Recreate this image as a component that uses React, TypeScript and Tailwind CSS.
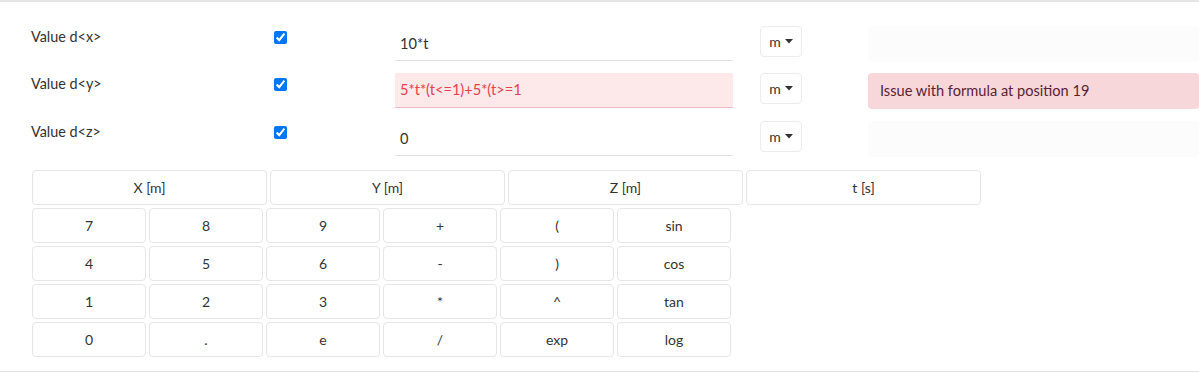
import React from 'react';

type Row = { label: string; value: string; error?: string };

const ROWS: Row[] = [
  { label: 'Value d<x>', value: '10*t' },
  { label: 'Value d<y>', value: '5*t*(t<=1)+5*(t>=1', error: 'Issue with formula at position 19' },
  { label: 'Value d<z>', value: '0' },
];

const HEADERS = ['X [m]', 'Y [m]', 'Z [m]', 't [s]'];

const KEYS = [
  ['7', '8', '9', '+', '(', 'sin'],
  ['4', '5', '6', '-', ')', 'cos'],
  ['1', '2', '3', '*', '^', 'tan'],
  ['0', '.', 'e', '/', 'exp', 'log'],
];

const Caret = () => (
  <svg width="8" height="5" viewBox="0 0 8 5" className="ml-[4px]">
    <path d="M0 0h8L4 4.5z" fill="#333" />
  </svg>
);

export default function App() {
  return (
    <div
      className="w-[1199px] h-[372px] overflow-hidden bg-white text-[#333] text-[14px] border-t-2 border-b border-[#e6e6e6]"
      style={{ fontFamily: 'Lato, "Open Sans", sans-serif' }}
    >
      <div className="flex flex-col gap-[12.5px] pt-[23.5px]">
        {ROWS.map((row) => (
          <div key={row.label} className="flex items-start h-[35px]">
            <div className="w-[243px] pl-[31px] pt-[1px] leading-5 text-[14.4px]">{row.label}</div>
            <div className="w-[152px] pt-[2px] pl-[31px]">
              <input type="checkbox" defaultChecked className="m-0 w-[13px] h-[13px] accent-[#0075ff]" />
            </div>
            <div
              className={`w-[338px] h-[35px] flex items-center pl-[5px] border-b text-[14.6px] ${
                row.error ? 'bg-[#fde8ea] border-[#f2bcc3] text-[#e8404f]' : 'border-[#e3e3e3] text-[#333] pt-[2px]'
              }`}
            >
              {row.value}
            </div>
            <div className="w-[27px]" />
            <button className="w-[42px] h-[31px] flex items-center justify-center border border-[#ececec] rounded-[4px] bg-white text-[14px] text-[#333]">
              m<Caret />
            </button>
            <div className="w-[66px]" />
            <div
              className={`flex-1 h-[36px] rounded-[4px] flex items-center pl-[12px] text-[14.6px] ${
                row.error ? 'bg-[#f8d7da] text-[#5a1e35]' : 'bg-[#fcfcfc]'
              }`}
            >
              {row.error}
            </div>
          </div>
        ))}
      </div>

      <div className="pl-[32px] pt-[14px] flex flex-col gap-[3px]">
        <div className="flex gap-[3px]">
          {HEADERS.map((h) => (
            <button
              key={h}
              className="w-[235px] h-[35px] border border-[#e6e6e6] rounded-[4px] bg-white text-[#333] text-[14px]"
            >
              {h}
            </button>
          ))}
        </div>
        {KEYS.map((r, i) => (
          <div key={i} className="flex gap-[3px]">
            {r.map((k) => (
              <button
                key={k}
                className="w-[114px] h-[35px] border border-[#e6e6e6] rounded-[4px] bg-white text-[#333] text-[14px]"
              >
                {k}
              </button>
            ))}
          </div>
        ))}
      </div>
    </div>
  );
}
